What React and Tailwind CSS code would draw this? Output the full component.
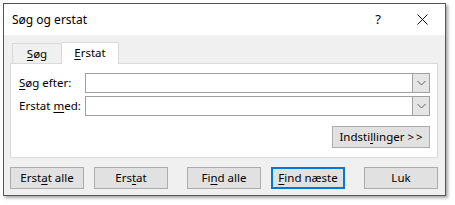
import React from "react";

const U = ({ children }) => <span className="underline underline-offset-2 decoration-1">{children}</span>;

function Btn({ children, className = "", focused = false }) {
  return (
    <div
      className={
        "h-[22px] flex items-center justify-center bg-[#e1e1e1] text-black " +
        (focused ? "border-2 border-[#0078d7]" : "border border-[#adadad]") +
        " " +
        className
      }
    >
      {children}
    </div>
  );
}

function Combo({ className = "" }) {
  return (
    <div className={"flex-1 h-[20px] flex border border-[#a0a0a0] bg-white " + className}>
      <div className="flex-1" />
      <div className="w-[17px] h-full bg-[#e5e5e5] border-l border-[#a0a0a0] flex items-center justify-center">
        <svg width="9" height="6" viewBox="0 0 9 6">
          <path d="M0.5 1 L4.5 5 L8.5 1" fill="none" stroke="#606060" strokeWidth="1" />
        </svg>
      </div>
    </div>
  );
}

export default function App() {
  return (
    <div
      className="w-[455px] h-[205px] bg-white pl-[3px] pt-[3px] text-[11.5px] leading-none text-black"
      style={{ fontFamily: '"Noto Sans", "Open Sans", sans-serif' }}
    >
      <div className="w-[443px] h-[193px] border border-[#555555] shadow-[2px_2px_3px_rgba(0,0,0,0.35)] flex flex-col">
        {/* title bar */}
        <div className="h-[31px] bg-white flex items-center pl-[8px] shrink-0">
          <span className="text-[12px]">Søg og erstat</span>
          <div className="flex-1" />
          <span className="text-[13px] mr-[36px]">?</span>
          <svg width="11" height="11" viewBox="0 0 11 11" className="mr-[17px]">
            <path d="M0.5 0.5 L10.5 10.5 M10.5 0.5 L0.5 10.5" stroke="#111" strokeWidth="1" />
          </svg>
        </div>
        {/* body */}
        <div className="flex-1 bg-[#f0f0f0] pl-[6px] pr-[7px] flex flex-col">
          {/* tabs */}
          <div className="flex items-end h-[28px] pl-[2px] relative z-10">
            <div className="w-[50px] h-[20px] border border-b-0 border-[#d9d9d9] bg-[#f0f0f0] flex items-center justify-center">
              <span><U>S</U>øg</span>
            </div>
            <div className="w-[57px] h-[22px] border border-b-0 border-l-0 border-[#d9d9d9] bg-white flex items-center justify-center mb-[-1px] pb-[1px]">
              <span><U>E</U>rstat</span>
            </div>
          </div>
          {/* panel */}
          <div className="h-[95px] bg-white border border-[#d9d9d9] pt-[9px] pl-[8px] pr-[7px] flex flex-col">
            <div className="flex items-center">
              <span className="w-[66px]"><U>S</U>øg efter:</span>
              <Combo />
            </div>
            <div className="flex items-center mt-[3px]">
              <span className="w-[66px]">Erstat <U>m</U>ed:</span>
              <Combo />
            </div>
            <div className="flex justify-end mt-[10px]">
              <Btn className="w-[98px]">Indsti<U>l</U>linger &gt;<span className="ml-[2px]">&gt;</span></Btn>
            </div>
          </div>
          {/* bottom buttons */}
          <div className="flex mt-[9px]">
            <Btn className="w-[74px]">Erst<U>a</U>t alle</Btn>
            <Btn className="w-[74px] ml-[10px]">Ers<U>t</U>at</Btn>
            <Btn className="w-[74px] ml-[19px]">Fi<U>n</U>d alle</Btn>
            <Btn className="w-[74px] ml-[10px]" focused><U>F</U>ind næste</Btn>
            <Btn className="w-[74px] ml-[19px]">Luk</Btn>
          </div>
        </div>
      </div>
    </div>
  );
}
